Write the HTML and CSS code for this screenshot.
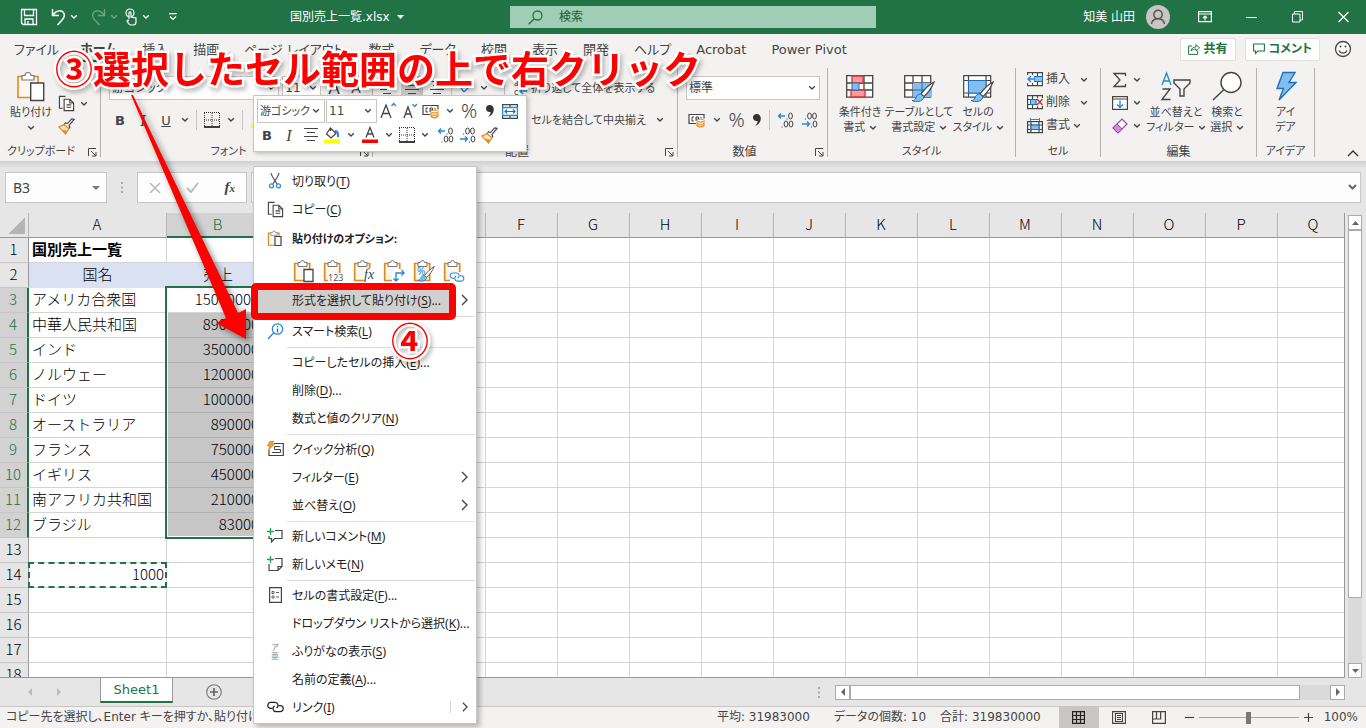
FILE: index.html
```html
<!DOCTYPE html>
<html lang="ja">
<head>
<meta charset="utf-8">
<meta name="viewport" content="width=device-width, initial-scale=1">
<title>国別売上一覧.xlsx</title>
<link rel="stylesheet" href="styles.css">
</head>
<body>
<svg class="defs" aria-hidden="true">
  <symbol id="chev" viewBox="0 0 8 6"><path d="M1.2 1.2 4 4l2.800-2.800" fill="none" stroke="currentColor" stroke-width="1.300"/></symbol>
  <symbol id="board" viewBox="0 0 22 24"><path d="M5 4.500H1.700v17h15V4.500H13.500" fill="#fbf6ee" stroke="#e08a1e" stroke-width="1.700"/><path d="M5 7.500v-4h2.500a2 2 0 0 1 4 0H14v4z" fill="#fff" stroke="#777"/></symbol>
  <symbol id="brush" viewBox="0 0 18 18"><path d="M17 1.500 14.500 1 10 6 8 5l-1.500 2 4.500 4.500 1.500-1.500-1-2z" fill="#fff" stroke="#444" stroke-width="1.200"/><path d="M6.500 7 1 9.500l7 7.500 3.500-5.500z" fill="#fbe3c4" stroke="#e08a1e" stroke-width="1.200"/><path d="m4 12.500 4 4 1.500-3z" fill="#e08a1e"/></symbol>
  <symbol id="copy" viewBox="0 0 18 18"><path d="M5 14H1.500V1.500H8" fill="none" stroke="#444" stroke-width="1.200"/><path d="M6.500 4.500h6l4 4v8h-10zM12.500 4.500v4h4M9 10.500h5M9 13h5" fill="#fff" stroke="#444" stroke-width="1.200"/></symbol>
  <symbol id="borders" viewBox="0 0 16 16"><path d="M.5 1v14M15.500 1v14M8 1v14M0 .5h16M0 8h16" fill="none" stroke="#333" stroke-dasharray="1 1"/><path d="M0 15h16" stroke="#111" stroke-width="1.600"/></symbol>
  <symbol id="bucket" viewBox="0 0 18 18"><path d="m7.500 2 5.500 5.500-5 4.500L3.500 8zM7.500 2V5" fill="#fff" stroke="#444" stroke-width="1.200"/><path d="M12 5c3 0 3 2 3 6" fill="none" stroke="#2b7cd3" stroke-width="2"/><path d="M1 13.500h16v3.500H1z" fill="#ff0"/></symbol>
  <symbol id="money" viewBox="0 0 18 16"><path d="M8 11.500H1V2.500h15v4" fill="#fff" stroke="#444" stroke-width="1.200"/><path d="M6 5H4v4h2M8 9V5h2.500v2H8M13 5v1.500" fill="none" stroke="#444"/><path d="M9 8.500v5c0 2 7 2 7 0v-5z" fill="#fbe3c4" stroke="#e08a1e"/><ellipse cx="12.500" cy="8.500" rx="3.500" ry="1.400" fill="#fff" stroke="#e08a1e"/><path d="M9 11c0 1.800 7 1.800 7 0M9 13c0 1.800 7 1.800 7 0" fill="none" stroke="#e08a1e"/></symbol>
  <symbol id="comma" viewBox="0 0 10 14"><path d="M4.500 1C7.500 1 9 3 8.800 6 8.500 9.500 6 12 3 13c1.800-1.800 2.600-3 2.600-5C2.500 8.500 1 6.500 1 4.500 1 2.500 2.500 1 4.500 1z" fill="#333"/></symbol>
  <symbol id="dec-up" viewBox="0 0 17 16"><path d="M8 4H1.500M4 1.500 1.500 4 4 6.500" fill="none" stroke="#2b88d8" stroke-width="1.400"/><g fill="none" stroke="#444"><ellipse cx="13.500" cy="4" rx="1.900" ry="3"/><ellipse cx="9" cy="12" rx="1.900" ry="3"/><ellipse cx="14" cy="12" rx="1.900" ry="3"/><path d="M10 6.500v1M5 14.500v1"/></g></symbol>
  <symbol id="dec-down" viewBox="0 0 17 16"><path d="M1 12h7.500M6 9.500 8.500 12 6 14.500" fill="none" stroke="#2b88d8" stroke-width="1.400"/><g fill="none" stroke="#444"><ellipse cx="8.500" cy="4" rx="1.900" ry="3"/><ellipse cx="13.500" cy="4" rx="1.900" ry="3"/><ellipse cx="14" cy="12" rx="1.900" ry="3"/><path d="M4.500 6.500v1M10.500 14.500v1"/></g></symbol>
  <symbol id="launch" viewBox="0 0 9 9"><path d="M.5 8V.5H8M3 3l5 5M8 4v4H4" fill="none" stroke="#444"/></symbol>
  <symbol id="grid-icon" viewBox="0 0 28 24"><path d="M.7.7h26v21.500H.7zM.7 8h26M.7 15h26M9 .7v21.500M18 .7v21.500" fill="#fff" stroke="#444" stroke-width="1.300"/></symbol>
  <symbol id="paint" viewBox="0 0 24 22"><path d="M23 1C19 3 13 9 10 13l3 2.500C17 12 21 6 23 1z" fill="#fff" stroke="#444" stroke-width="1.200"/><path d="M9.500 13c-3 0-4 2-4.500 4-.5 1.500-2 2.500-4 2.500 4 2 11 1.500 12-4z" fill="#83beec" stroke="#1e6fc0"/></symbol>
  <symbol id="link" viewBox="0 0 18 12"><g fill="none" stroke="currentColor" stroke-width="1.300"><path d="M5.500 7.500H4a3.200 3.200 0 0 1 0-6.400h4.500a3.200 3.200 0 0 1 1.500 6"/><path d="M12.500 4.500H14a3.200 3.200 0 0 1 0 6.400H9.500a3.200 3.200 0 0 1-1.500-6"/></g></symbol>
  <symbol id="right" viewBox="0 0 7 12"><path d="m1 1 5 5-5 5" fill="none" stroke="#444" stroke-width="1.400"/></symbol>
  <symbol id="lines" viewBox="0 0 16 16"><path d="M1 1.500h14M4 5.500h8M1 9.500h14M4 13.500h8" stroke="#444" stroke-width="1.200"/></symbol>
</svg>

<header class="titlebar">
  <div class="quick">
    <button aria-label="上書き保存"><svg width="18" height="18"><path d="M1 1.500h15.500v15H3L1.500 15V1.500M4.500 2v5.500h9V2M5 16.500v-5.500h8v5.500M8 16.500V13" fill="none" stroke="#fff" stroke-width="1.300"/></svg></button>
    <button class="undo" aria-label="元に戻す"><svg width="15" height="18"><path d="M1.500 1v6.500H8M2 7c3-5 9-5.500 11-1.500 1.500 4-2 6.500-6.500 11.500" fill="none" stroke="#fff" stroke-width="1.500"/></svg><svg class="c"><use href="#chev"/></svg></button>
    <button class="faded" aria-label="やり直し"><svg width="15" height="18"><path d="M13.500 1v6.500H7M13 7C10 2 4 1.500 2 5.500.5 9.500 4 12 8.500 17" fill="none" stroke="#fff" stroke-width="1.300"/></svg><svg class="c"><use href="#chev"/></svg></button>
    <button class="touch" aria-label="タッチ モード"><svg width="13" height="18"><circle cx="5" cy="5" r="4" fill="none" stroke="#fff" stroke-width="1.200"/><path d="M4 11V5c0-1.500 2-1.500 2 0v4l5 1v4c0 2-1 3-3 3H6c-2 0-3-2-4-4l1-1 1 1" fill="#217346" stroke="#fff" stroke-width="1.200"/></svg><svg class="c"><use href="#chev"/></svg></button>
    <button aria-label="カスタマイズ"><svg width="8" height="8"><path d="M0 .7h8" stroke="#fff" stroke-width="1.200"/><path d="M1 3.500 4 6.500l3-3" fill="none" stroke="#fff" stroke-width="1.200"/></svg></button>
  </div>
  <div class="doc-name">国別売上一覧.xlsx <svg width="7" height="4"><path d="M0 0h7L3.500 4z" fill="#fff"/></svg></div>
  <label class="search"><svg width="15" height="15"><circle cx="9.500" cy="5.500" r="4.500" fill="none" stroke="#217346" stroke-width="1.300"/><path d="M6 9 .7 14.300" stroke="#217346" stroke-width="1.400"/></svg><input type="text" placeholder="検索" aria-label="検索"></label>
  <div class="user">知美 山田 <svg width="24" height="24"><circle cx="12" cy="12" r="12" fill="#c8c6c4"/><g fill="none" stroke="#555" stroke-width="1.500"><circle cx="12" cy="9.500" r="4.200"/><path d="M5.500 19c1-7 12-7 13 0"/></g></svg></div>
  <div class="win">
    <button aria-label="リボンの表示オプション"><svg width="14" height="12"><path d="M.6.6h12.800v10H.6zM.6 3h12.800M7 9.500V5M5 7l2-2 2 2" fill="none" stroke="#fff" stroke-width="1.200"/></svg></button>
    <button aria-label="最小化"><svg width="11" height="12"><path d="M0 6.500h11" stroke="#fff"/></svg></button>
    <button aria-label="元に戻す (縮小)"><svg width="11" height="12"><path d="M2.500 3V.5h8V9H8M.5 3H8v8H.5z" fill="none" stroke="#fff"/></svg></button>
    <button aria-label="閉じる"><svg width="11" height="12"><path d="m.5 1 10 10M10.500 1l-10 10" stroke="#fff" stroke-width="1.200"/></svg></button>
  </div>
</header>

<nav class="tabs">
  <button>ファイル</button><button class="on">ホーム</button><button>挿入</button><button>描画</button><button>ページ レイアウト</button><button>数式</button><button>データ</button><button>校閲</button><button>表示</button><button>開発</button><button>ヘルプ</button><button>Acrobat</button><button>Power Pivot</button>
  <div class="tab-actions">
    <button class="action"><svg width="12" height="12"><path d="M4 3H.6v8.400h9V8M3 8c.5-3 2.500-4 5-4V1.500L11.500 5 8 8V6C6 6 4.500 6.500 3 8z" fill="none" stroke="#217346"/></svg>共有</button>
    <button class="action"><svg width="12" height="12"><path d="M.6 1h10.800v7H5l-2.500 2.500V8H.6z" fill="none" stroke="#217346" stroke-width="1.100"/></svg>コメント</button>
    <button aria-label="フィードバック"><svg width="18" height="18"><circle cx="9" cy="9" r="7.500" fill="#fff" stroke="#444" stroke-width="1.300"/><path d="M5 10.500c1.500 3.500 6.500 3.500 8 0" fill="none" stroke="#444" stroke-width="1.200"/><circle cx="6.500" cy="6.500" r="1" fill="#444"/><circle cx="11.500" cy="6.500" r="1" fill="#444"/></svg></button>
  </div>
</nav>

<section class="ribbon">
  <div class="group g-clip">
    <div class="body">
      <button class="big"><svg class="pic" viewBox="0 0 28 32"><path d="M6 5.500H1v21h20v-21h-5" fill="#fbf6ee" stroke="#e08a1e" stroke-width="1.600"/><path d="M5 9V4.500h3a3 3 0 0 1 6 0h3V9z" fill="#fff" stroke="#777" stroke-width="1.200"/><path d="M13.700 12h13v17.500h-13z" fill="#fff" stroke="#444" stroke-width="1.400"/></svg><span>貼り付け<br><svg class="c"><use href="#chev"/></svg></span></button>
      <div class="stack clip-small">
        <button class="sm" aria-label="コピー"><svg width="17" height="17"><use href="#copy"/></svg><svg class="c"><use href="#chev"/></svg></button>
        <button class="sm" aria-label="書式のコピー"><svg width="17" height="17"><use href="#brush"/></svg></button>
      </div>
    </div>
    <div class="cap">クリップボード<svg class="launch"><use href="#launch"/></svg></div>
  </div>
  <div class="group g-font">
    <div class="body col">
      <div class="row tight">
        <div class="combo font-name"><select aria-label="フォント"><option>游ゴシック</option></select><svg class="c"><use href="#chev"/></svg></div>
        <div class="combo font-size"><select aria-label="フォント サイズ"><option>11</option></select><svg class="c"><use href="#chev"/></svg></div>
        <button class="big-a">A</button><button class="small-a">A</button>
      </div>
      <div class="row">
        <button class="ltr bold">B</button><button class="ltr ital">I</button><button class="ltr under">U</button><svg class="c"><use href="#chev"/></svg><i class="bar"></i>
        <button aria-label="罫線"><svg width="16" height="16"><use href="#borders"/></svg></button><svg class="c"><use href="#chev"/></svg><i class="bar"></i>
        <button aria-label="塗りつぶしの色"><svg width="18" height="18"><use href="#bucket"/></svg></button>
      </div>
    </div>
    <div class="cap">フォント<svg class="launch"><use href="#launch"/></svg></div>
  </div>
  <div class="group g-align">
    <div class="body col">
      <div class="row">
        <button aria-label="上揃え"><svg width="16" height="16"><use href="#lines"/></svg></button>
        <button class="pressed" aria-label="上下中央揃え"><svg width="16" height="16"><use href="#lines"/></svg></button>
        <button aria-label="下揃え"><svg width="16" height="16"><use href="#lines"/></svg></button><i class="bar"></i>
        <button aria-label="方向"><svg width="16" height="16"><path d="m3 8 3 4M6 12l9-9M15 3h-4M15 3v4" fill="none" stroke="#2b88d8" stroke-width="1.300"/></svg></button><svg class="c"><use href="#chev"/></svg><i class="bar last"></i>
        <button class="lab"><svg width="14" height="16"><text x="0" y="6" class="tiny">ab</text><text x="0" y="15" class="tiny">c</text><path d="M12.500 4v7H6M9 8l-3 3 3 3" fill="none" stroke="#2b88d8" stroke-width="1.500"/></svg>折り返して全体を表示する</button>
      </div>
      <div class="row merge"><button class="lab">セルを結合して中央揃え</button><svg class="c"><use href="#chev"/></svg></div>
    </div>
    <div class="cap kanji">配置<svg class="launch"><use href="#launch"/></svg></div>
  </div>
  <div class="group g-num">
    <div class="body col">
      <div class="combo"><select aria-label="表示形式"><option>標準</option></select><svg class="c"><use href="#chev"/></svg></div>
      <div class="row">
        <button aria-label="通貨"><svg width="18" height="16"><use href="#money"/></svg></button><svg class="c"><use href="#chev"/></svg>
        <button class="pct">%</button><button aria-label="桁区切り"><svg width="10" height="14"><use href="#comma"/></svg></button><i class="bar"></i>
        <button aria-label="小数点以下の表示桁数を増やす"><svg width="17" height="16"><use href="#dec-up"/></svg></button><button aria-label="小数点以下の表示桁数を減らす"><svg width="17" height="16"><use href="#dec-down"/></svg></button>
      </div>
    </div>
    <div class="cap kanji">数値<svg class="launch"><use href="#launch"/></svg></div>
  </div>
  <div class="group g-style">
    <div class="body">
      <button class="big"><svg class="pic" viewBox="-2 -4 32 32"><use href="#grid-icon" width="28" height="24"/><path d="M6 1h11v7H6zM5 15h14v7H5z" fill="#ff9a9a" stroke="#d13438" stroke-width="1.300"/><path d="M6 8h7v7H6z" fill="#83beec" stroke="#1e6fc0"/></svg><span>条件付き<br>書式 <svg class="c"><use href="#chev"/></svg></span></button>
      <button class="big wide"><svg class="pic" viewBox="-1 -4 32 32"><use href="#grid-icon" width="28" height="24"/><path d="M9 8h18v14H9z" fill="#83beec"/><path d="M9 15h18M18 8v14" stroke="#1e6fc0"/><use href="#paint" x="7" y="6" width="24" height="22"/></svg><span>テーブルとして<br>書式設定 <svg class="c"><use href="#chev"/></svg></span></button>
      <button class="big"><svg class="pic" viewBox="-1 -4 32 32"><path d="M.7.7h27v21.500H.7zM.7 5.500h27M.7 18h27M5.500.7v21.500M23 .7v21.500" fill="#fff" stroke="#444" stroke-width="1.200"/><path d="M5.500 5.500H23V18H5.500z" fill="#83beec" stroke="#1e6fc0"/><use href="#paint" x="7" y="6" width="24" height="22"/></svg><span>セルの<br>スタイル <svg class="c"><use href="#chev"/></svg></span></button>
    </div>
    <div class="cap">スタイル</div>
  </div>
  <div class="group g-cells">
    <div class="body stack">
      <button class="sm lab"><svg width="16" height="15"><path d="M.6.6h14.800v13H.6zM.6 4.500h14.800M.6 9.500h14.800M5.500.6v13M10.500.6v13" fill="#fff" stroke="#444" stroke-width="1.200"/><path d="M7 4.500h8.500v5H7z" fill="#83beec" stroke="#1e6fc0"/><path d="M0 3h7v8H0z" fill="#f3f2f1"/><path d="M8 7H1M4 4 1 7l3 3" fill="none" stroke="#2b88d8" stroke-width="1.400"/></svg>挿入<svg class="c push"><use href="#chev"/></svg></button>
      <button class="sm lab"><svg width="16" height="15"><path d="M.6.6h14.800v13H.6zM.6 4.500h14.800M.6 9.500h14.800M5.500.6v13M10.500.6v13" fill="#fff" stroke="#444" stroke-width="1.200"/><path d="M3.500 4.500H9v5H3.500z" fill="#83beec" stroke="#1e6fc0"/><path d="M10 3h6v8h-6z" fill="#f3f2f1"/><path d="m10 4 5.500 6M15.500 4 10 10" stroke="#d13438" stroke-width="1.500"/></svg>削除<svg class="c push"><use href="#chev"/></svg></button>
      <button class="sm lab"><svg width="16" height="16"><path d="M.6 3.600h14.800v11H.6zM.6 7h14.800M.6 11.500h14.800M4 3.600v11M12 3.600v11" fill="#fff" stroke="#444" stroke-width="1.200"/><path d="M4 7h8v4.500H4z" fill="#83beec" stroke="#1e6fc0"/><path d="M3.500 1.500h9M3.500 0v3M12.500 0v3" stroke="#2b88d8"/></svg>書式 <svg class="c"><use href="#chev"/></svg></button>
    </div>
    <div class="cap">セル</div>
  </div>
  <div class="group g-edit">
    <div class="body">
      <div class="stack">
        <button class="sm" aria-label="オート SUM"><svg width="16" height="16"><path d="M13.500 4V1.500H2L8 8l-6 6.500h11.500V12" fill="none" stroke="#444" stroke-width="1.300"/></svg><svg class="c"><use href="#chev"/></svg></button>
        <button class="sm" aria-label="フィル"><svg width="16" height="16"><path d="M.6 1.600h14.800v12.800H.6zM.6 4h14.800" fill="#fff" stroke="#444" stroke-width="1.200"/><path d="M8 5.500V12M5 9.500 8 12.500l3-3" fill="none" stroke="#2b88d8" stroke-width="1.400"/></svg><svg class="c"><use href="#chev"/></svg></button>
        <button class="sm" aria-label="クリア"><svg width="16" height="16"><path d="m1 10 9-9 5 5-9 9z" fill="#fff" stroke="#a33ea8" stroke-width="1.200"/><path d="m1 10 4-4 5 5-4 4z" fill="#d58ad8" stroke="#a33ea8"/></svg><svg class="c"><use href="#chev"/></svg></button>
      </div>
      <button class="big mid"><svg class="pic" viewBox="0 0 32 32"><path d="m2 14 4.500-12L11 14M3.500 10h6" fill="none" stroke="#2b88d8" stroke-width="1.400"/><path d="M2.500 18H10l-8 10.500h8.500M14 9h16v3l-6 6v7h-4v-7l-6-6z" fill="none" stroke="#444" stroke-width="1.400"/></svg><span>並べ替えと<br>フィルター <svg class="c"><use href="#chev"/></svg></span></button>
      <button class="big"><svg class="pic" viewBox="0 0 32 32"><circle cx="20" cy="11.500" r="10" fill="#fff" stroke="#444" stroke-width="1.400"/><path d="M13 18.500 2 29" stroke="#444" stroke-width="1.500"/></svg><span>検索と<br>選択 <svg class="c"><use href="#chev"/></svg></span></button>
    </div>
    <div class="cap kanji">編集</div>
  </div>
  <div class="group g-idea">
    <div class="body"><button class="big"><svg class="pic" viewBox="0 0 32 32"><path d="M13 1.500h12l-6 10h7L9 29l4.500-11.500H7z" fill="#83beec" stroke="#1e6fc0" stroke-width="1.400"/></svg><span>アイ<br>デア</span></button></div>
    <div class="cap">アイデア</div>
  </div>
  <button class="collapse" aria-label="リボンを折りたたむ"><svg width="12" height="7"><path d="m1 6 5-5 5 5" fill="none" stroke="#333" stroke-width="1.400"/></svg></button>
</section>

<section class="formula">
  <div class="namebox"><input type="text" value="B3" aria-label="名前ボックス"><svg width="8" height="4"><path d="M0 0h8L4 4z" fill="#777"/></svg></div>
  <svg class="dots" width="3" height="11"><path d="M0 0h2v2H0zM0 4.500h2v2H0zM0 9h2v2H0z" fill="#aaa"/></svg>
  <div class="fx"><svg width="12" height="12"><path d="m1 1 10 10M11 1 1 11" stroke="#bbb" stroke-width="1.600"/></svg><svg width="13" height="12"><path d="m1 6 4 4 7-9" fill="none" stroke="#bbb" stroke-width="2"/></svg><button aria-label="関数の挿入"><i>f</i><small>x</small></button></div>
  <div class="fbox"><input type="text" aria-label="数式バー"><svg width="9" height="7"><path d="m1 1 3.500 3.500L8 1" fill="none" stroke="#666" stroke-width="2"/></svg></div>
</section>

<main class="sheet">
  <div class="grid-wrap"><table class="grid" id="grid"></table></div>
  <div class="vscroll"><span class="btn"><svg width="7" height="4"><path d="M3.500 0 7 4H0z" fill="#666"/></svg></span><span class="thumb"></span><span class="track"></span><span class="btn"><svg width="7" height="4"><path d="M0 0h7L3.500 4z" fill="#666"/></svg></span></div>
</main>

<section class="sheetbar">
  <svg class="nav" width="33" height="8"><path d="M4 0v8L0 4zM29 0v8l4-4z" fill="#bbb"/></svg>
  <button class="sheet-tab">Sheet1</button>
  <button class="add" aria-label="新しいシート"><svg width="16" height="16"><circle cx="8" cy="8" r="7.300" fill="none" stroke="#777" stroke-width="1.100"/><path d="M8 4v8M4 8h8" stroke="#666" stroke-width="1.700"/></svg></button>
  <svg class="dots" width="3" height="11"><path d="M0 0h2v2H0zM0 4.500h2v2H0zM0 9h2v2H0z" fill="#aaa"/></svg>
  <div class="hscroll"><span class="btn"><svg width="4" height="8"><path d="M4 0v8L0 4z" fill="#666"/></svg></span><span class="thumb"></span><span class="track"></span><span class="btn"><svg width="4" height="8"><path d="M0 0v8l4-4z" fill="#666"/></svg></span></div>
</section>

<footer class="status">
  <span class="msg">コピー先を選択し、Enter キーを押すか、貼り付けを選択します。</span>
  <span class="avg">平均: 31983000</span><span>データの個数: 10</span><span>合計: 319830000</span>
  <div class="views">
    <button class="on" aria-label="標準"><svg width="13" height="13"><path d="M.6.600h11.800v11.800H.6zM.6 4.500h11.800M.6 8.500h11.800M4.500.6v11.800M8.500.6v11.800" fill="none" stroke="#222" stroke-width="1.200"/></svg></button>
    <button aria-label="ページ レイアウト"><svg width="14" height="13"><path d="M.6.600h12.800v11.800H.6zM3.500 2.500h7v8h-7zM5 4.500h4M5 6.500h4M5 8.500h4" fill="none" stroke="#444" stroke-width="1.100"/></svg></button>
    <button aria-label="改ページ プレビュー"><svg width="14" height="13"><path d="M.6.600h12.800v11.800H.6zM.6 8h8V.6M4.500.6V8" fill="none" stroke="#444" stroke-width="1.200"/></svg></button>
  </div>
  <div class="zoom"><button aria-label="縮小"><svg width="9" height="9"><path d="M0 4.500h9" stroke="#444" stroke-width="1.200"/></svg></button><input type="range" min="0" max="100" value="50" aria-label="ズーム"><button aria-label="拡大"><svg width="9" height="9"><path d="M0 4.500h9M4.500 0v9" stroke="#444" stroke-width="1.200"/></svg></button><span class="pctv">100%</span></div>
</footer>

<div class="mini">
  <div class="row">
    <div class="combo mf"><select aria-label="ミニ フォント"><option>游ゴシック</option></select><svg class="c"><use href="#chev"/></svg></div>
    <div class="combo ms"><select aria-label="ミニ フォント サイズ"><option>11</option></select><svg class="c"><use href="#chev"/></svg></div>
    <button class="w20" aria-label="フォント サイズの拡大"><svg width="17" height="18"><path d="M1 16 6 3l5 13M3 11.500h6" fill="none" stroke="#444" stroke-width="1.300"/><path d="m11.500 4 2.200-2.500L16 4" fill="none" stroke="#2b88d8" stroke-width="1.300"/></svg></button>
    <button class="w20" aria-label="フォント サイズの縮小"><svg width="15" height="18"><path d="M1 16 5 5l4 11M2.500 12h5" fill="none" stroke="#444" stroke-width="1.300"/><path d="m9.500 2 2.200 2.500L14 2" fill="none" stroke="#2b88d8" stroke-width="1.300"/></svg></button>
    <button aria-label="通貨 "><svg width="18" height="16"><use href="#money"/></svg></button><svg class="c"><use href="#chev"/></svg>
    <button class="pct">%</button><button class="w20" aria-label="桁区切り "><svg width="10" height="14"><use href="#comma"/></svg></button>
    <button aria-label="セルを結合して中央揃え "><svg width="16" height="15"><path d="M.6.600h14.800v13.800H.6zM8 .6V3M8 12v2.500" fill="#fff" stroke="#444" stroke-width="1.200"/><path d="M.6 3.500h14.800v8H.6z" fill="#fff" stroke="#2b88d8" stroke-width="1.300"/><path d="M3 7.500h10M5 5.500l-2 2 2 2M11 5.500l2 2-2 2" fill="none" stroke="#1e6fc0" stroke-width="1.200"/></svg></button>
  </div>
  <div class="row r2">
    <button class="ltr bold">B</button><button class="ltr ital">I</button>
    <button class="w20" aria-label="中央揃え"><svg width="14" height="16"><path d="M0 1.500h14M3 5.500h8M0 9.500h14M3 13.500h8" stroke="#444" stroke-width="1.200"/></svg></button>
    <button aria-label="塗りつぶし"><svg width="18" height="18"><use href="#bucket"/></svg></button><svg class="c"><use href="#chev"/></svg>
    <button aria-label="フォントの色"><svg width="18" height="18"><path d="M5 11.500 9 1.500l4 10M6.500 8h5" fill="none" stroke="#444" stroke-width="1.300"/><path d="M1 13.500h16v3.500H1z" fill="#f00"/></svg></button><svg class="c"><use href="#chev"/></svg>
    <button aria-label="罫線 "><svg width="16" height="16"><use href="#borders"/></svg></button><svg class="c"><use href="#chev"/></svg>
    <button class="w20" aria-label="小数点以下を増やす"><svg width="17" height="16"><use href="#dec-up"/></svg></button><button class="w20" aria-label="小数点以下を減らす"><svg width="17" height="16"><use href="#dec-down"/></svg></button>
    <button class="w20" aria-label="書式のコピー "><svg width="17" height="17"><use href="#brush"/></svg></button>
  </div>
</div>

<div class="menu" role="menu">
  <button role="menuitem"><span class="ico"><svg width="14" height="16"><path d="M3 0c1 5 4 7 6 11M11 0c-1 5-4 7-6 11" fill="none" stroke="#555" stroke-width="1.200"/><g fill="none" stroke="#2b88d8" stroke-width="1.200"><circle cx="3.500" cy="12.800" r="2"/><circle cx="10.500" cy="12.800" r="2"/></g></svg></span>切り取り(<u>T</u>)</button>
  <button role="menuitem"><span class="ico"><svg width="17" height="17"><use href="#copy"/></svg></span>コピー(<u>C</u>)</button>
  <div class="head"><span class="ico"><svg width="16" height="17"><use href="#board" width="16" height="17"/><path d="M8 6.500h6v9H8z" fill="#fff" stroke="#444" stroke-width="1.200"/></svg></span>貼り付けのオプション:</div>
  <div class="paste-opts">
    <button aria-label="貼り付け"><svg width="22" height="24"><use href="#board"/><path d="M11 10.500h9v12h-9z" fill="#fff" stroke="#444" stroke-width="1.300"/></svg></button>
    <button aria-label="値"><svg width="24" height="24"><use href="#board" width="22" height="24"/><path d="M5 14h17v10H5z" fill="#fff"/><text x="5" y="22" class="n123">123</text></svg></button>
    <button aria-label="数式"><svg width="24" height="24"><use href="#board" width="22" height="24"/><path d="M11 9h11v15H11z" fill="#fff"/><text x="11" y="20" class="nfx">fx</text></svg></button>
    <button aria-label="行/列の入れ替え"><svg width="22" height="24"><use href="#board"/><path d="M9 10h13v14H9z" fill="#fff"/><path d="M13 22v-8h8M10.500 19.500 13 22l2.500-2.500M18.500 11 21 14l-2.500 2.500" fill="none" stroke="#2b88d8" stroke-width="1.400"/></svg></button>
    <button aria-label="書式設定"><svg width="22" height="24"><use href="#board"/><text x="4" y="16" class="npc">%</text><use href="#paint" x="4" y="6" width="18" height="18"/></svg></button>
    <button aria-label="リンク貼り付け"><svg width="22" height="24"><use href="#board"/><path d="M7 13h15v11H7z" fill="#fff"/><use class="blue" href="#link" x="6" y="13" width="16" height="10"/></svg></button>
  </div>
  <button role="menuitem" class="hot"><span class="hl"><span class="ico"></span>形式を選択して貼り付け(<u>S</u>)...</span><svg class="sub"><use href="#right"/></svg></button>
  <hr>
  <button role="menuitem"><span class="ico"><svg width="17" height="17"><circle cx="10.500" cy="6" r="5.200" fill="#fff" stroke="#2b88d8" stroke-width="1.300"/><path d="M6.500 10 1 16" stroke="#2b88d8" stroke-width="1.400"/><path d="M10.500 5.500v4M10.500 3v1.300" stroke="#1e6fc0" stroke-width="1.300"/></svg></span>スマート検索(<u>L</u>)</button>
  <hr>
  <button role="menuitem"><span class="ico"></span>コピーしたセルの挿入(<u>E</u>)...</button>
  <button role="menuitem"><span class="ico"></span>削除(<u>D</u>)...</button>
  <button role="menuitem"><span class="ico"></span>数式と値のクリア(<u>N</u>)</button>
  <hr>
  <button role="menuitem"><span class="ico"><svg width="17" height="16"><path d="M7 2.500h9.300v12H2V9" fill="none" stroke="#444" stroke-width="1.200"/><path d="M5 11.500h8.500v-3h-6v-3h6" fill="none" stroke="#444"/><path d="M3 0h4L5 3h2.500L1.500 9 3 5H.5z" fill="#f7a13d" stroke="#d77b10" stroke-width=".8"/></svg></span>クイック分析(<u>Q</u>)</button>
  <button role="menuitem"><span class="ico"></span>フィルター(<u>E</u>)<svg class="sub"><use href="#right"/></svg></button>
  <button role="menuitem"><span class="ico"></span>並べ替え(<u>O</u>)<svg class="sub"><use href="#right"/></svg></button>
  <hr>
  <button role="menuitem"><span class="ico"><svg width="16" height="16"><path d="M8 2.500h7v8H7.500L4.500 14v-3.500H2V8" fill="none" stroke="#444" stroke-width="1.200"/><path d="M3.500 0v7M0 3.500h7" stroke="#21a34a" stroke-width="1.300"/></svg></span>新しいコメント(<u>M</u>)</button>
  <button role="menuitem"><span class="ico"><svg width="16" height="16"><path d="M8 2.500h7v8l-4 4H2V8M11 14.500v-4h4" fill="none" stroke="#444" stroke-width="1.200"/><path d="M3.500 0v7M0 3.500h7" stroke="#21a34a" stroke-width="1.300"/></svg></span>新しいメモ(<u>N</u>)</button>
  <hr>
  <button role="menuitem"><span class="ico"><svg width="13" height="16"><path d="M.6.600h11.800v14.800H.6z" fill="#fff" stroke="#444" stroke-width="1.200"/><path d="M3 4.500h2v2H3zM3 9h2v2H3zM7 5.500h3M7 10h3" fill="none" stroke="#666"/></svg></span>セルの書式設定(<u>F</u>)...</button>
  <button role="menuitem"><span class="ico"></span>ドロップダウン リストから選択(<u>K</u>)...</button>
  <button role="menuitem"><span class="ico furi"><span>ア</span><span>亜</span></span>ふりがなの表示(<u>S</u>)</button>
  <button role="menuitem"><span class="ico"></span>名前の定義(<u>A</u>)...</button>
  <button role="menuitem"><span class="ico"><svg width="17" height="12"><use href="#link"/></svg></span>リンク(<u>I</u>)<svg class="sub split"><use href="#right"/></svg></button>
</div>

<svg class="arrow" width="270" height="360" aria-hidden="true"><path d="M131 95h2l105 218 8-4v30l-30-16 10-5z" fill="#f00"/></svg>
<div class="frame"></div>
<div class="note note-text">③選択したセル範囲の上で右クリック</div>
<div class="note note-four">④</div>
<script src="script.js"></script>
</body>
</html>
```
FILE: styles.css
```css
* { box-sizing: border-box; }
html, body { height: 100%; margin: 0; }
body {
  display: flex; flex-direction: column; position: relative; overflow: hidden;
  font: 12px/15px "DejaVu Sans", "Noto Sans CJK JP", sans-serif;
  font-feature-settings: "palt";
  color: #444; background: #e6e6e6;
}
button, input, select { font: inherit; font-feature-settings: inherit; color: inherit; background: none; border: 0; padding: 0; margin: 0; }
button { display: flex; align-items: center; justify-content: center; white-space: nowrap; }
svg { flex: none; display: block; }
.defs { position: absolute; width: 0; height: 0; }
.c { width: 8px; height: 6px; }

.titlebar { height: 34px; flex: none; display: grid; grid-template-columns: 290px 220px minmax(100px, 366px) 1fr auto; align-items: center; background: #217346; color: #fff; }
.quick { display: flex; align-items: center; padding-left: 20px; gap: 13px; }
.quick button { gap: 4px; }
.faded { opacity: .35; }
.quick .touch { padding-right: 6px; margin-left: -6px; }
.doc-name { display: flex; align-items: center; gap: 7px; }
.search { display: flex; align-items: center; gap: 16px; height: 22px; padding-left: 18px; background: #a0cdb5; }
.search input { flex: 1; min-width: 0; }
.search input::placeholder { color: #185c37; opacity: 1; }
.user { display: flex; align-items: center; justify-content: flex-end; gap: 11px; padding-right: 12px; }
.win { display: flex; }
.win button { width: 46px; height: 34px; }

.tabs { height: 30px; flex: none; display: flex; gap: 25px; padding-left: 14px; background: #f3f2f1; font-size: 13px; }
.tabs .on { font-weight: bold; border-bottom: 2px solid #217346; padding-top: 2px; height: 28px; margin-left: -4px; }
.tab-actions { margin-left: auto; display: flex; align-items: center; gap: 9px; padding-right: 14px; font-size: 12px; }
.tab-actions button:last-child { margin-left: 5px; }
.action { height: 23px; padding: 0 7px; gap: 4px; background: #fff; border: 1px solid #e1dfdd; border-radius: 2px; color: #217346; font-weight: bold; }

.ribbon { height: 97px; flex: none; display: flex; padding: 4px 0; background: #f3f2f1; }
.group { display: flex; flex-direction: column; border-right: 1px solid #b5b3b1; flex: none; }
.body { flex: 1; display: flex; align-items: flex-start; }
.col { flex-direction: column; align-items: stretch; gap: 8px; padding: 8px 7px 0 8px; }
.cap { display: flex; justify-content: center; position: relative; font-size: 11px; line-height: 18px; height: 14px; }
.kanji { font-size: 12px; }
.launch { position: absolute; right: 3px; bottom: 0; width: 9px; height: 9px; }
.big { flex-direction: column; justify-content: flex-start; padding-top: 3px; font-size: 11px; line-height: 15px; width: 50px; gap: 2px; }
.big .pic { width: 32px; height: 32px; }
.big span { text-align: center; }
.big .c { display: inline-block; vertical-align: middle; }
.wide { width: 68px; }
.mid { width: 56px; }
.stack { display: flex; flex-direction: column; align-items: stretch; }
.sm { height: 23px; gap: 5px; justify-content: flex-start; }
.lab { gap: 3px; }
.row { display: flex; align-items: center; height: 24px; gap: 6px; }
.bar { width: 1px; height: 20px; background: #c8c6c4; }
.combo { display: grid; align-items: center; height: 24px; border: 1px solid #c8c6c4; background: #fff; }
.combo > * { grid-area: 1 / 1; }
.combo select { appearance: none; width: 100%; height: 100%; padding-left: 2px; }
.combo .c { justify-self: end; margin-right: 3px; pointer-events: none; }
.g-clip { width: 101px; }
.g-clip .body { padding-left: 6px; }
.g-clip .cap { padding-right: 18px; }
.clip-small { padding: 24px 0 0 2px; }
.clip-small .sm { gap: 5px; }
.g-font { width: 272px; }
.g-font .tight { gap: 3px; }
.g-font .cap { padding-right: 16px; }
.font-name { width: 171px; }
.font-size { width: 39px; }
.big-a { font-size: 17px; width: 20px; }
.small-a { font-size: 14px; width: 18px; }
.ltr { font-size: 13px; width: 16px; }
.bold { font-weight: bold; }
.ital { font-family: "Liberation Serif", serif; font-style: italic; font-size: 16px; }
.under { text-decoration: underline; }
.g-font .row:last-child { gap: 7px; padding-left: 3px; }
.g-align { width: 305px; }
.g-align .col { padding-left: 6px; }
.g-align .last { margin: 0 3px 0 10px; }
.g-align .lab { font-size: 11px; }
.pressed { background: #c8c6c4; width: 22px; height: 24px; }
.g-align .merge { padding-left: 152px; gap: 10px; }
.g-align .cap { padding-right: 16px; }
.tiny { font-size: 8px; fill: #444; }
.g-num { width: 150px; }
.g-num .cap { padding-right: 16px; }
.g-num .row { justify-content: space-between; padding: 0 2px; gap: 0; }
.pct { font: 300 20px/20px "Noto Sans", sans-serif; width: 18px; }
.g-style { width: 188px; }
.g-style .body { padding-left: 7px; }
.g-cells { width: 85px; }
.g-cells .body { padding: 0 12px 0 11px; }
.push { margin-left: auto; }
.g-edit { width: 156px; }
.g-edit .body { padding-left: 11px; }
.g-edit .mid { margin-left: 7px; }
.g-edit .big:last-child { width: 46px; }
.g-idea { width: 58px; }
.g-idea .body { justify-content: center; }
.collapse { margin-left: auto; align-self: flex-end; padding: 0 7px 0 0; }

.formula { height: 52px; flex: none; display: flex; align-items: flex-start; padding: 11px 5px 0; background: linear-gradient(#cfcfcf, #e6e6e6 7px); }
.formula > div { height: 31px; border: 1px solid #c6c6c6; background: #fdfdfd; display: flex; align-items: center; }
.namebox { width: 102px; padding: 0 6px 0 7px; }
.namebox input { width: 100%; min-width: 0; font: 14px "Noto Sans", sans-serif; }
.formula .dots { margin: 10px 13px 0 14px; }
.fx { width: 110px; justify-content: space-between; padding: 0 11px; }
.fx i { font: italic bold 15px "Liberation Serif", serif; }
.fx small { font: italic bold 11px "Liberation Serif", serif; }
.formula .fbox { flex: 1; margin-left: 4px; padding-right: 3px; }
.fbox input { flex: 1; min-width: 0; }

.sheet { flex: 1; min-height: 0; display: flex; }
.grid-wrap { flex: 1; min-width: 0; overflow: hidden; border-right: 1px solid #999; border-bottom: 1px solid #999; }
.grid { table-layout: fixed; width: 1350px; border-collapse: separate; border-spacing: 0; background: #fff; font: 300 15px/20px "Noto Sans CJK JP", sans-serif; font-feature-settings: normal; color: #000; }
.grid th, .grid td { height: 25px; padding: 0 2px 2px 3px; border-right: 1px solid #d4d4d4; border-bottom: 1px solid #d4d4d4; white-space: nowrap; }
.grid th { font-weight: 300; text-align: center; background: #e6e6e6; padding: 0 2px 2px 1px; }
.grid thead th { border-bottom-color: #999; border-right-color: #b5b5b5; }
.grid tbody th { border-right-color: #999; border-bottom-color: #c6c6c6; }
.grid .corner { background: linear-gradient(135deg, #e6e6e6 50%, #b4b4b4 50%) 8px 4px / 17px 17px no-repeat #e6e6e6; }
.grid thead .sel { background: #d2d2d2; color: #217346; border-bottom: 2px solid #217346; }
.grid tbody .sel { background: #d2d2d2; color: #217346; border-right: 2px solid #217346; }
.grid .title { font-weight: bold; }
.grid .fill { background: #d9e1f2; border-color: #d9e1f2; text-align: center; padding-left: 2px; }
.grid .num { text-align: right; }
.grid .picked { background: #c6c6c6; border-bottom-color: #b0b0b0; }
.grid .first, .grid .copied { position: relative; }
.outline { position: absolute; left: -2px; top: -2px; width: 106px; height: 253px; border: 2px solid #217346; box-shadow: inset 0 0 0 1px #fff; }
.copied::after { content: ""; position: absolute; inset: -1px; border: 2px dashed #217346; }
.vscroll { width: 21px; flex: none; padding: 2px 4px 0 3px; display: flex; flex-direction: column; }
.btn { flex: none; display: flex; align-items: center; justify-content: center; width: 15px; height: 15px; border: 1px solid #ababab; background: #fff; }
.thumb { background: #fff; border: 1px solid #ababab; }
.track { background: #dadada; }
.vscroll .thumb { flex: 369; }
.vscroll .track { flex: 65; }
.vscroll .btn { width: 14px; }

.sheetbar { height: 28px; flex: none; display: flex; align-items: center; padding-right: 21px; }
.sheetbar .nav { margin: 0 39px 0 28px; }
.sheet-tab { width: 73px; height: 25px; align-self: flex-start; background: #fff; color: #217346; border: 1px solid #999; border-top: 0; border-bottom: 2px solid #217346; font-size: 13px; }
.add { margin: 0 0 0 33px; }
.sheetbar .dots { margin: 0 14px 0 auto; }
.hscroll { display: flex; width: 510px; height: 15px; }
.hscroll .thumb { flex: 450; }
.hscroll .track { flex: 30; }

.status { height: 22px; flex: none; display: flex; align-items: center; background: #f3f2f1; border-top: 1px solid #c8c6c4; gap: 14px; padding-right: 8px; }
.msg { padding-left: 6px; margin-right: auto; }
.avg { margin-right: 10px; }
.views { display: flex; align-self: stretch; margin-left: 4px; }
.views button { width: 40px; }
.views .on { background: #c8c6c4; }
.zoom { display: flex; align-items: center; gap: 5px; margin-left: -8px; }
.zoom input { width: 100px; height: 14px; appearance: none; background: linear-gradient(#a6a6a6, #a6a6a6) center / 100% 1px no-repeat; }
.zoom input::-webkit-slider-thumb { appearance: none; width: 5px; height: 12px; background: #777; }
.pctv { margin-left: 6px; }

.mini { position: absolute; left: 253px; top: 95px; width: 274px; height: 57px; padding: 3px; border: 1px solid #c8c6c4; background: #fff; box-shadow: 2px 2px 4px rgba(0,0,0,.2); }
.mini .row { gap: 2px; }
.mini .combo { height: 24px; margin-right: -1px; }
.mf { width: 68px; font-size: 11px; }
.ms { width: 51px; }
.w20 { width: 20px; }
.mini .c { margin: 0 4px; }
.mini .ltr { width: 20px; }

.menu { position: absolute; left: 253px; top: 166px; width: 224px; padding: 1px 0; border: 1px solid #c6c6c6; background: #fff; color: #222; box-shadow: 3px 3px 5px rgba(0,0,0,.25); font-family: "Noto Sans", "Noto Sans CJK JP", sans-serif; }
.menu > button, .head { display: flex; align-items: center; justify-content: flex-start; width: 100%; height: 28px; padding: 0 8px 2px 0; }
.menu .head { height: 30px; font-size: 11px; font-weight: bold; }
.ico { width: 38px; flex: none; display: flex; justify-content: center; padding-left: 4px; }
.menu u { text-underline-offset: 2px; }
.sub { width: 7px; height: 12px; margin-left: auto; }
.split { width: 18px; padding-left: 11px; border-left: 1px solid #d0d0d0; }
.menu hr { height: 1px; margin: 1px 1px 1px 33px; border: 0; background: #dcdcdc; }
.hl { display: flex; align-items: center; height: 26px; width: 197px; background: #d2d0ce; }
.furi { flex-direction: column; align-items: center; font-size: 8px; line-height: 9px; color: #888; }
.paste-opts { display: flex; height: 33px; padding-left: 39px; }
.paste-opts button { width: 30px; justify-content: flex-start; }
.n123 { font-size: 9px; fill: #555; }
.nfx { font: italic 14px "Liberation Serif", serif; fill: #444; }
.npc { font-size: 10px; fill: #2b88d8; }
.blue { color: #2b88d8; }

.arrow { position: absolute; left: 0; top: 0; filter: drop-shadow(3px 3px 3px rgba(0,0,0,.45)); pointer-events: none; }
.frame { position: absolute; left: 251px; top: 283px; width: 205px; height: 37px; border: 7px solid #f00; border-radius: 5px; pointer-events: none; }
.note { position: absolute; font: bold 38px/48px "Noto Sans CJK JP", sans-serif; font-feature-settings: normal; color: #f00; -webkit-text-stroke: 5px #fff; paint-order: stroke fill; filter: drop-shadow(2px 3px 2px rgba(0,0,0,.25)); white-space: nowrap; pointer-events: none; }
.note-text { left: 55px; top: 43px; }
.note-four { left: 391px; top: 315px; }
```
FILE: script.js
```js
const letters = ["A", "B", "C", "D", "E", "F", "G", "H", "I", "J", "K", "L", "M", "N", "O", "P", "Q"];
const countries = [
  ["アメリカ合衆国", 150000000], ["中華人民共和国", 89000000], ["インド", 35000000],
  ["ノルウェー", 12000000], ["ドイツ", 10000000], ["オーストラリア", 8900000],
  ["フランス", 7500000], ["イギリス", 4500000], ["南アフリカ共和国", 2100000], ["ブラジル", 830000]
];
const widths = [29, 138, 103];
let html = "<colgroup>";
for (let i = 0; i <= letters.length; i++) html += `<col style="width:${widths[i] || 72}px">`;
html += '</colgroup><thead><tr><th class="corner"></th>';
html += letters.map(l => `<th scope="col"${l === "B" ? ' class="sel"' : ""}>${l}</th>`).join("");
html += "</tr></thead><tbody>";
for (let r = 1; r <= 18; r++) {
  const data = countries[r - 3];
  html += `<tr><th scope="row"${data ? ' class="sel"' : ""}>${r}</th>`;
  letters.forEach((l, c) => {
    let cls = "", text = "";
    if (r === 1 && c === 0) { cls = "title"; text = "国別売上一覧"; }
    if (r === 2 && c < 2) { cls = "fill"; text = c ? "売上" : "国名"; }
    if (data && c === 0) text = data[0];
    if (data && c === 1) {
      cls = r === 3 ? "num first" : "num picked";
      text = data[1] + (r === 3 ? '<span class="outline"></span>' : "");
    }
    if (r === 14 && c === 0) { cls = "num copied"; text = "1000"; }
    html += `<td${cls ? ` class="${cls}"` : ""}>${text}</td>`;
  });
  html += "</tr>";
}
document.getElementById("grid").innerHTML = html + "</tbody>";
```
